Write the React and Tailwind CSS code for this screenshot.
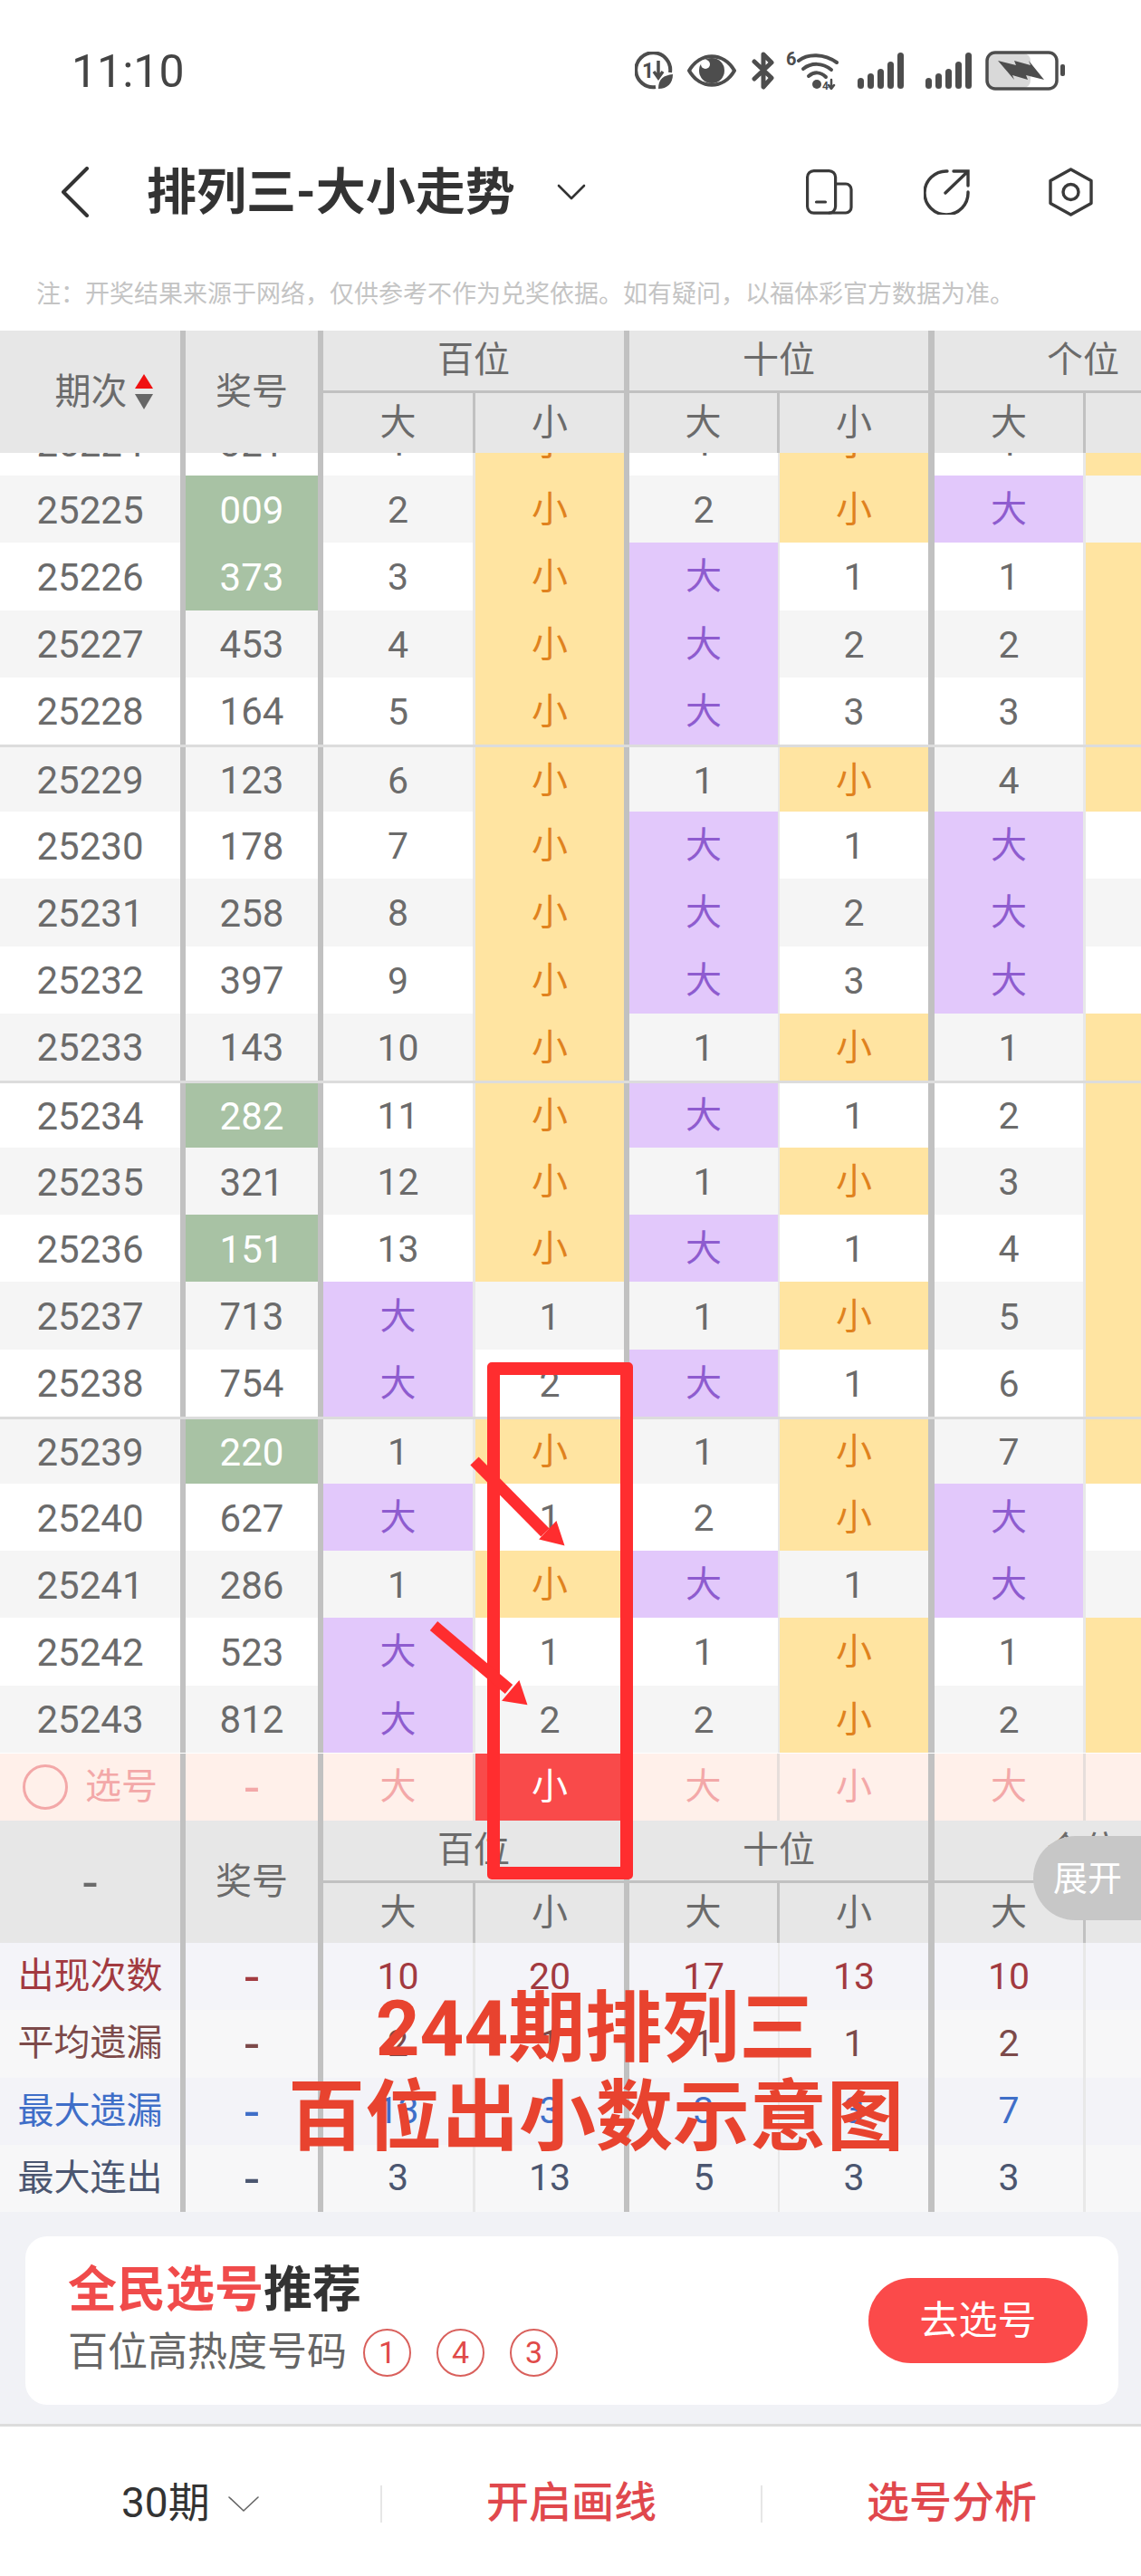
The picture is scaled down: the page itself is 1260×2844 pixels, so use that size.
import React from 'react';

const B = '大';
const S = '小';

// id, number, green highlight, then 百位 大/小, 十位 大/小, 个位 大 (个位 小 runs off the screen, only its colour shows)
const rows = [
  ['25224', '321', false, 1, S, 1, S, 1, S],
  ['25225', '009', true, 2, S, 2, S, B, 1],
  ['25226', '373', true, 3, S, B, 1, 1, S],
  ['25227', '453', false, 4, S, B, 2, 2, S],
  ['25228', '164', false, 5, S, B, 3, 3, S],
  ['25229', '123', false, 6, S, 1, S, 4, S],
  ['25230', '178', false, 7, S, B, 1, B, 1],
  ['25231', '258', false, 8, S, B, 2, B, 2],
  ['25232', '397', false, 9, S, B, 3, B, 3],
  ['25233', '143', false, 10, S, 1, S, 1, S],
  ['25234', '282', true, 11, S, B, 1, 2, S],
  ['25235', '321', false, 12, S, 1, S, 3, S],
  ['25236', '151', true, 13, S, B, 1, 4, S],
  ['25237', '713', false, B, 1, 1, S, 5, S],
  ['25238', '754', false, B, 2, B, 1, 6, S],
  ['25239', '220', true, 1, S, 1, S, 7, S],
  ['25240', '627', false, B, 1, 2, S, B, 1],
  ['25241', '286', false, 1, S, B, 1, B, 2],
  ['25242', '523', false, B, 1, 1, S, 1, S],
  ['25243', '812', false, B, 2, 2, S, 2, S],
];

const stats = [
  { label: '出现次数', vals: [10, 20, 17, 13, 10], color: 'text-[#a23a40]', bg: 'bg-[#f4f4f9]' },
  { label: '平均遗漏', vals: [2, 1, 1, 1, 2], color: 'text-[#7c4a4a]', bg: 'bg-[#f7f7f8]' },
  { label: '最大遗漏', vals: [13, 3, 3, 3, 7], color: 'text-[#3f6ec8]', bg: 'bg-[#f3f3f8]' },
  { label: '最大连出', vals: [3, 13, 5, 3, 3], color: 'text-[#4b5670]', bg: 'bg-[#f7f7f8]' },
];

const gridCols = 'grid grid-cols-[205px_152px_168px_170px_166px_171px_167px_161px]';
const thick = 'border-r-[6px] border-[#c1c1c1]';
const thick7 = 'border-r-[7px] border-[#c1c1c1]';

// thin dividers change colour between the table sections
const bodyBorders = [thick, thick, 'border-r-[3px] border-[#e8e8e8]', thick, 'border-r-[2px] border-[#e8e8e8]', thick7, 'border-r-[3px] border-[#e8e8e8]', ''];
const headBorders = [thick, thick, 'border-r-[3px] border-[#c1c1c1]', thick, 'border-r-[3px] border-[#c1c1c1]', thick7, 'border-r-[3px] border-[#c1c1c1]', ''];
const pickBorders = [thick, thick, 'border-r-[3px] border-[#e6dedb]', thick, 'border-r-[3px] border-[#e6dedb]', thick7, 'border-r-[3px] border-[#e6dedb]', ''];

const cellBase = 'flex items-center justify-center';

const Dash = () => <span className="text-[58px] leading-none">-</span>;

const Cell = ({ i, v }) => {
  let tone = 'text-[#6b6b6b] text-[41px] pt-[3px]';
  if (v === B) tone = 'bg-[#e2c8fb] text-[#8e5ccf] pt-[2px]';
  if (v === S) tone = 'bg-[#ffe4a1] text-[#e0821e] pt-[2px]';
  // last column is off screen apart from its background
  return <div className={`${cellBase} ${bodyBorders[i]} ${tone}`}>{i < 7 ? v : ''}</div>;
};

const Row = ({ row, index }) => {
  const [id, num, hot, ...vals] = row;
  const shaded = index % 2 === 1;
  const fifth = index % 5 === 0 && index > 0;
  return (
    <div className={`${gridCols} h-[74.2px] ${shaded ? 'bg-[#f5f5f5]' : 'bg-white'} ${fifth ? 'border-t-[3px] border-[#dcdcdc]' : ''}`}>
      <div className={`${cellBase} ${bodyBorders[0]} text-[#6b6b6b] text-[42px] pt-[3px]`}>{id}</div>
      <div className={`${cellBase} ${bodyBorders[1]} text-[42px] pt-[3px] ${hot ? 'bg-[#a8c2a4] text-white' : 'text-[#6b6b6b]'}`}>{num}</div>
      {vals.map((v, i) => <Cell key={i} i={i + 2} v={v} />)}
    </div>
  );
};

const TableHead = ({ first }) => (
  <div className={`${gridCols} grid-rows-[69px_66px] bg-[#e7e7e7] text-[#6b6b6b]`}>
    <div className={`${cellBase} row-span-2 ${headBorders[0]}`}>{first}</div>
    <div className={`${cellBase} row-span-2 ${headBorders[1]}`}>奖号</div>
    <div className={`${cellBase} col-span-2 ${thick} border-b-[3px]`}>百位</div>
    <div className={`${cellBase} col-span-2 ${thick7} border-b-[3px]`}>十位</div>
    <div className={`${cellBase} col-span-2 border-b-[3px] border-[#c1c1c1]`}>个位</div>
    {[B, S, B, S, B, ''].map((t, i) => (
      <div key={i} className={`${cellBase} ${headBorders[i + 2]}`}>{t}</div>
    ))}
  </div>
);

const SortArrows = () => (
  <svg width="20" height="40" viewBox="0 0 20 40" className="ml-[8px]">
    <polygon points="10,0 20,16 0,16" fill="#f01010" />
    <polygon points="0,22 20,22 10,39" fill="#666666" />
  </svg>
);

const PickRow = () => (
  <div className={`${gridCols} h-[74px] bg-[#fff0ea] text-[#f3a8a8]`}>
    <div className={`${cellBase} ${pickBorders[0]} gap-[19px]`}>
      <span className="block w-[50px] h-[50px] rounded-full border-[3px] border-[#f3a8a8]" />
      <span>选号</span>
    </div>
    <div className={`${cellBase} ${pickBorders[1]}`}><Dash /></div>
    <div className={`${cellBase} ${pickBorders[2]}`}>{B}</div>
    <div className={`${cellBase} ${pickBorders[3]} bg-[#f94a4a] text-white`}>{S}</div>
    <div className={`${cellBase} ${pickBorders[4]}`}>{B}</div>
    <div className={`${cellBase} ${pickBorders[5]}`}>{S}</div>
    <div className={`${cellBase} ${pickBorders[6]}`}>{B}</div>
    <div />
  </div>
);

const StatRow = ({ s }) => (
  <div className={`${gridCols} h-[74.25px] ${s.bg} ${s.color}`}>
    <div className={`${cellBase} ${bodyBorders[0]}`}>{s.label}</div>
    <div className={`${cellBase} ${bodyBorders[1]}`}><Dash /></div>
    {s.vals.map((v, i) => <div key={i} className={`${cellBase} ${bodyBorders[i + 2]} text-[41px]`}>{v}</div>)}
    <div />
  </div>
);

const Signal = () => (
  <svg width="51" height="40" viewBox="0 0 51 40" fill="#4d4d4d">
    <rect x="0" y="28" width="7" height="12" rx="3.5" />
    <rect x="11" y="23" width="7" height="17" rx="3.5" />
    <rect x="22" y="18" width="7" height="22" rx="3.5" />
    <rect x="33" y="10" width="7" height="30" rx="3.5" />
    <rect x="44" y="0" width="7" height="40" rx="3.5" />
  </svg>
);

const StatusIcons = () => (
  <div className="flex items-center">
    <svg width="42" height="42" viewBox="0 0 42 42" fill="none" stroke="#4d4d4d" strokeWidth="4">
      <path d="M23 39 A19 19 0 1 1 39 23" />
      <text x="8" y="29" fontSize="23" fontWeight="700" fontFamily="Roboto" fill="#4d4d4d" stroke="none">1</text>
      <path d="M26 10 V28 M21 22 L26 29 L31 22" strokeWidth="3.5" />
      <path d="M26 41 C26 30 32 26 42 25 C42 35 36 41 26 41Z" fill="#4d4d4d" stroke="none" />
    </svg>
    <svg width="54" height="36" viewBox="0 0 54 36" fill="none" stroke="#4d4d4d" strokeWidth="4" className="ml-[16px]">
      <path d="M2 18 C14 -3 40 -3 52 18 C40 39 14 39 2 18Z" strokeLinejoin="round" />
      <circle cx="27" cy="18" r="14" fill="#4d4d4d" stroke="none" />
      <circle cx="20" cy="11" r="5" fill="#fff" stroke="none" />
    </svg>
    <svg width="26" height="42" viewBox="0 0 26 42" fill="none" stroke="#4d4d4d" strokeWidth="5" strokeLinejoin="round" strokeLinecap="round" className="ml-[17px]">
      <path d="M3 11 L22 29 L13 39 V3 L22 12 L3 30" />
    </svg>
    <svg width="58" height="42" viewBox="0 0 58 42" fill="none" stroke="#4d4d4d" strokeWidth="4" strokeLinecap="round" className="ml-[12px]">
      <text x="0" y="15" fontSize="20" fontWeight="700" fontFamily="Roboto" fill="#4d4d4d" stroke="none">6</text>
      <path d="M14 10 C24 2 42 2 56 12" />
      <path d="M19 19 C28 12 40 12 50 20" />
      <path d="M25 27 C31 22 38 22 44 28" />
      <circle cx="34" cy="36" r="5" fill="#4d4d4d" stroke="none" />
      <text x="40" y="42" fontSize="12" fontWeight="700" fontFamily="Roboto" fill="#4d4d4d" stroke="none">4</text>
      <path d="M50 31 V41 M47 37 L50 41 L53 37" strokeWidth="2.5" />
    </svg>
    <div className="ml-[21px]"><Signal /></div>
    <div className="ml-[24px]"><Signal /></div>
    <svg width="88" height="44" viewBox="0 0 88 44" fill="none" className="ml-[15px]">
      <rect x="3" y="3" width="47" height="38" rx="8" fill="#d9d9d9" />
      <rect x="2" y="2" width="77" height="40" rx="9" stroke="#4d4d4d" strokeWidth="3.5" />
      <path d="M14 11 L34 16 L32 11 L50 16 L48 11 L65 32 L45 27 L47 32 L30 27 L32 32 Z" fill="#4d4d4d" />
      <rect x="83" y="15" width="5" height="13" rx="2" fill="#4d4d4d" />
    </svg>
  </div>
);

const NavIcons = () => (
  <div className="ml-auto flex items-center pr-[53px] text-[#3a3a3a]">
    <svg width="52" height="50" viewBox="0 0 52 50" fill="none" stroke="currentColor" strokeWidth="3.2" strokeLinecap="round">
      <rect x="1.6" y="1.6" width="31" height="46.5" rx="7" />
      <path d="M33 16 H44 A6 6 0 0 1 50 22 V42 A6 6 0 0 1 44 48 H26" />
      <path d="M11.5 36 H21.5" />
    </svg>
    <svg width="51" height="50" viewBox="0 0 51 50" fill="none" stroke="currentColor" strokeWidth="3.4" strokeLinecap="round" className="ml-[78px]">
      <path d="M26 2 A24 24 0 1 0 49 25" />
      <path d="M24 26 L49 2 M33 2 H49 V18" />
    </svg>
    <svg width="49" height="54" viewBox="0 0 49 54" fill="none" stroke="currentColor" strokeWidth="3.4" strokeLinejoin="round" className="ml-[87px]">
      <path d="M24.5 2 L47 14.5 V39.5 L24.5 52 L2 39.5 V14.5 Z" />
      <circle cx="24.5" cy="27" r="8.5" />
    </svg>
  </div>
);

export default function App() {
  return (
    <div className="relative w-[1260px] h-[2844px] overflow-hidden bg-white font-['Roboto','Noto_Sans_CJK_SC',sans-serif]">
      {/* Status bar */}
      <div className="h-[156px] flex items-center justify-between pl-[79px] pr-[84px]">
        <span className="text-[50px] text-[#444444] leading-none pt-[2px]">11:10</span>
        <StatusIcons />
      </div>

      {/* Nav */}
      <div className="h-[112px] flex items-center pl-[67px]">
        <svg width="32" height="56" viewBox="0 0 32 56" fill="none" stroke="#333333" strokeWidth="4" strokeLinecap="round" strokeLinejoin="round">
          <path d="M29 2 L3 28 L29 54" />
        </svg>
        <h1 className="ml-[63px] text-[55px] leading-none font-bold text-[#333333]">排列三-大小走势</h1>
        <svg width="32" height="18" viewBox="0 0 32 18" fill="none" stroke="#333333" strokeWidth="2.6" strokeLinecap="round" strokeLinejoin="round" className="ml-[46px]">
          <path d="M2 2 L16 16 L30 2" />
        </svg>
        <NavIcons />
      </div>

      <div className="h-[97px] pt-[43px] pl-[40px] text-[27px] leading-[28px] text-[#c4c4c4] whitespace-nowrap">
        注：开奖结果来源于网络，仅供参考不作为兑奖依据。如有疑问，以福体彩官方数据为准。
      </div>

      {/* Table */}
      <div className="w-[1360px] text-[40px] leading-none">
        <TableHead first={<div className="flex items-center pl-[30px]"><span>期次</span><SortArrows /></div>} />
        <div className="h-[1436px] overflow-hidden">
          <div className="-mt-[49px]">
            {rows.map((r, i) => <Row key={r[0]} row={r} index={i} />)}
          </div>
        </div>
        <PickRow />
        <TableHead first={<Dash />} />
        {stats.map((s) => <StatRow key={s.label} s={s} />)}
      </div>

      {/* Recommendation card */}
      <div className="h-[237px] bg-[#f1f2f6] border-b-[3px] border-[#dcdcdc] px-[28px] pt-[27px]">
        <div className="h-[186px] w-[1207px] bg-white rounded-[24px] flex items-center justify-between pl-[47px] pr-[34px]">
          <div>
            <div className="text-[54px] leading-[58px] font-bold text-[#f04b4b]">全民选号<span className="text-[#333333]">推荐</span></div>
            <div className="mt-[12px] flex items-center text-[44px] leading-[54px] text-[#666666]">
              百位高热度号码
              <div className="ml-[18px] flex gap-[28px]">
                {[1, 4, 3].map((n) => (
                  <span key={n} className="w-[53px] h-[53px] rounded-full border-[2px] border-[#d9605c] flex items-center justify-center text-[34px] text-[#e04a48]">{n}</span>
                ))}
              </div>
            </div>
          </div>
          <button className="w-[242px] h-[94px] rounded-full bg-[#fb4a4a] text-white text-[43px] leading-none">去选号</button>
        </div>
      </div>

      {/* Bottom bar */}
      <div className="h-[165px] flex items-start pt-[62px]">
        <div className="w-[422px] h-[41px] mt-[3px] border-r-[2px] border-[#e6e6e6] flex items-center pl-[134px] text-[46px] leading-none text-[#333333]">
          <span className="-mt-[4px]">30期</span>
          <svg width="36" height="19" viewBox="0 0 36 19" fill="none" stroke="#666666" strokeWidth="1.6" strokeLinecap="round" strokeLinejoin="round" className="ml-[19px]">
            <path d="M2 2 L18 17 L34 2" />
          </svg>
        </div>
        <div className="w-[420px] h-[41px] mt-[3px] border-r-[2px] border-[#e6e6e6] flex items-center justify-center text-[47px] leading-none font-medium text-[#e0484d]">
          <span className="-mt-[4px]">开启画线</span>
        </div>
        <div className="w-[418px] h-[41px] mt-[3px] flex items-center justify-center text-[47px] leading-none font-medium text-[#e0484d]">
          <span className="-mt-[4px]">选号分析</span>
        </div>
      </div>

      {/* 展开 tab sits over the header */}
      <div className="absolute left-[1141px] top-[2027px] w-[119px] h-[93px] rounded-l-[47px] bg-[#c7c7c7] text-white text-[38px] leading-none flex items-center pl-[22px]">展开</div>

      {/* Hand-drawn annotations on top of the chart */}
      <div className="absolute left-[538px] top-[1504px] w-[161px] h-[571px] border-[14px] border-[#ff2d2f] rounded-[5px]" />
      <svg width="180" height="300" viewBox="0 0 180 300" className="absolute left-[470px] top-[1600px]" fill="#ff2d2f" stroke="#ff2d2f">
        <path d="M54 13 L132 92" strokeWidth="13" />
        <polygon points="152,105 127,99 144,81" strokeWidth="2" />
        <path d="M9 195 L92 265" strokeWidth="13" />
        <polygon points="111,281 86,277 103,257" strokeWidth="2" />
      </svg>
      <div className="absolute left-[300px] top-[2191px] w-[716px] text-center text-[85px] leading-[98px] font-bold text-[#e8432f] whitespace-nowrap">
        244期排列三
        <br />
        百位出小数示意图
      </div>
    </div>
  );
}
